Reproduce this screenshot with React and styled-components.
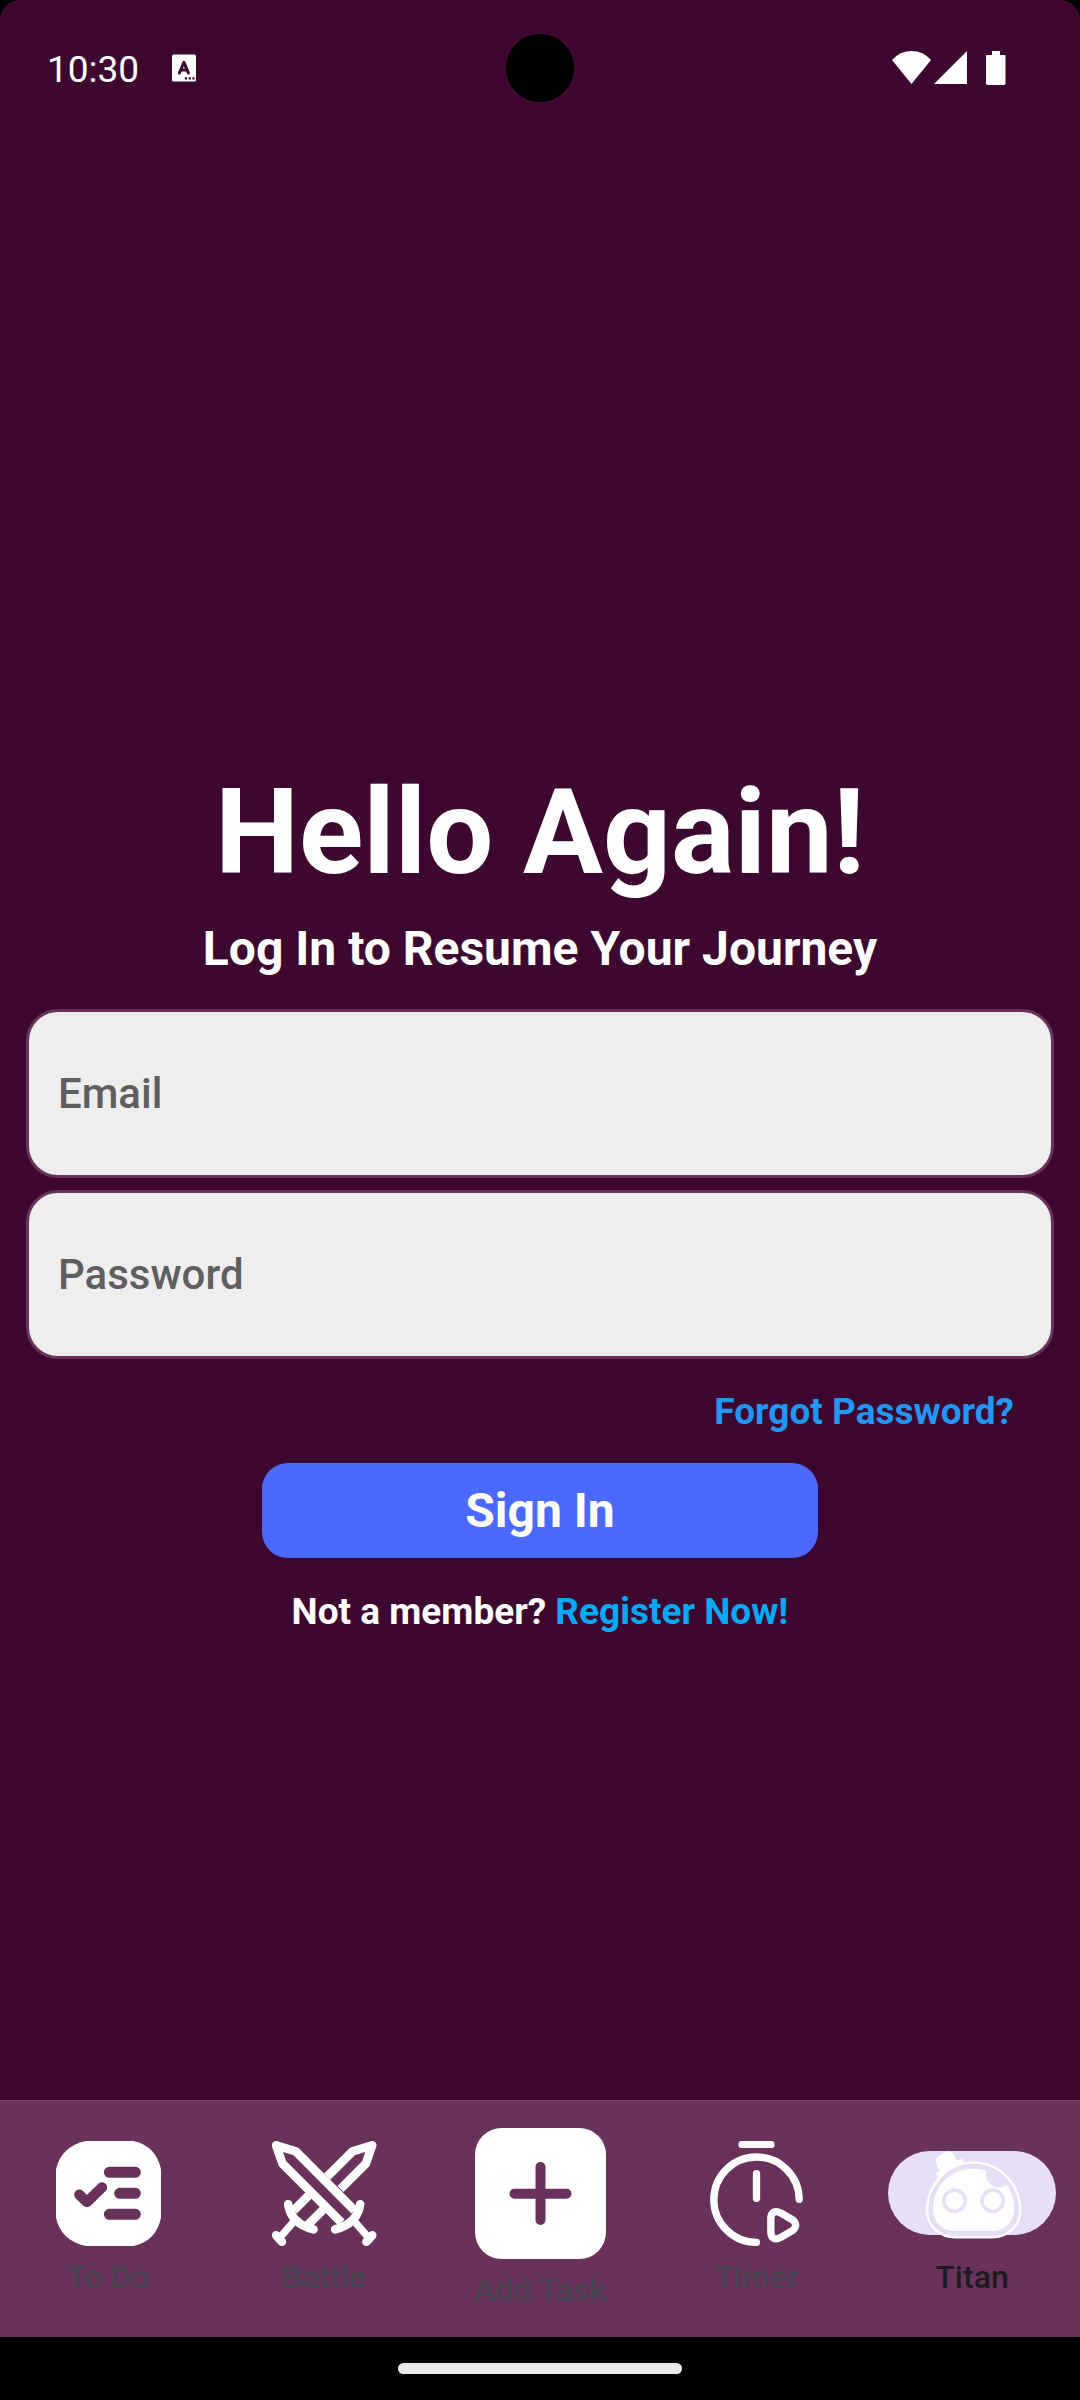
import React, { useState } from "react";
import styled, { createGlobalStyle } from "styled-components";

const color = {
  page: "#3d0830",
  bar: "#68325a",
  barEdge: "#74426a",
  field: "#eeeeee",
  hint: "#5f5f5f",
  primary: "#4b69ff",
  link: "#2196f3",
  register: "#03a9f4",
  label: "#49454f",
  labelActive: "#1d1b20",
  indicator: "#e8def8",
};

const GlobalStyle = createGlobalStyle`
  *, *::before, *::after { box-sizing: border-box; }
  body {
    margin: 0;
    background: #000;
    font-family: Roboto, "Noto Sans", sans-serif;
  }
`;

const Screen = styled.div`
  min-height: 100vh;
  display: flex;
  flex-direction: column;
  background: ${color.page};
  border-radius: 20px 20px 0 0;
  overflow: hidden;
`;

const StatusBar = styled.header`
  display: grid;
  grid-template-columns: 1fr auto 1fr;
  align-items: center;
  height: 136px;
  padding: 0 74px 0 47px;
  color: #fff;
`;

const StatusLeft = styled.div`
  display: flex;
  align-items: baseline;
  gap: 32px;
  padding-top: 4px;
`;

const Clock = styled.time`
  font-size: 37px;
  line-height: 44px;
`;

const Camera = styled.div`
  width: 68px;
  height: 68px;
  margin-left: 27px;
  border-radius: 50%;
  background: #000;
`;

const StatusRight = styled.div`
  display: flex;
  justify-content: flex-end;
`;

const Main = styled.main`
  flex: 1;
  display: flex;
  flex-direction: column;
  justify-content: center;
  padding: 160px 26px 0;
`;

const Title = styled.h1`
  margin: 0 0 18px;
  color: #fff;
  font-size: 119px;
  font-weight: 700;
  line-height: 140px;
  text-align: center;
`;

const Subtitle = styled.p`
  margin: 0 0 32px;
  color: #fff;
  font-size: 48px;
  font-weight: 700;
  line-height: 56px;
  text-align: center;
`;

const Form = styled.form`
  display: flex;
  flex-direction: column;
`;

const Fields = styled.div`
  display: grid;
  gap: 12px;
  margin-bottom: 31px;
`;

const Field = styled.input`
  width: 100%;
  height: 169px;
  padding: 0 29px;
  border: 3px solid ${color.bar};
  border-radius: 32px;
  outline: none;
  background: ${color.field};
  color: #222;
  font: 500 42px/50px Roboto, "Noto Sans", sans-serif;

  &::placeholder {
    color: ${color.hint};
    opacity: 1;
  }
`;

const TextLink = styled.a`
  color: ${(p) => p.$tone};
  font-size: 37px;
  font-weight: 700;
  line-height: 43px;
  text-decoration: none;
`;

const ForgotRow = styled.div`
  display: flex;
  justify-content: flex-end;
  padding-right: 40px;
  margin-bottom: 30px;
`;

const SubmitButton = styled.button`
  align-self: center;
  width: 556px;
  max-width: 100%;
  height: 95px;
  margin-bottom: 32px;
  border: 0;
  border-radius: 26px;
  background: ${color.primary};
  color: #fff;
  font: 700 48px/56px Roboto, "Noto Sans", sans-serif;
  cursor: pointer;
`;

const RegisterRow = styled.p`
  margin: 0;
  color: #fff;
  font-size: 37px;
  font-weight: 700;
  line-height: 43px;
  text-align: center;
`;

const NavBar = styled.nav`
  display: grid;
  grid-template-columns: repeat(5, 1fr);
  height: 237px;
  border-top: 1px solid ${color.barEdge};
  background: ${color.bar};
`;

const NavItem = styled.button`
  display: flex;
  flex-direction: column;
  align-items: center;
  justify-content: center;
  gap: 10px;
  padding: 0;
  border: 0;
  background: none;
  color: ${(p) => (p.$active ? color.labelActive : color.label)};
  font: 500 32px/42px Roboto, "Noto Sans", sans-serif;
  cursor: pointer;
`;

const IconSlot = styled.span`
  display: flex;
  align-items: center;
  justify-content: center;
  height: ${(p) => p.$size}px;
`;

const Indicator = styled.span`
  display: flex;
  align-items: center;
  justify-content: center;
  width: 168px;
  height: 84px;
  border-radius: 42px;
  background: ${(p) => (p.$active ? color.indicator : "transparent")};

  svg {
    flex: none;
  }
`;

const NavLabel = styled.span`
  display: block;
`;

const GestureBar = styled.footer`
  display: grid;
  place-items: center;
  height: 63px;
  background: #000;
`;

const Handle = styled.div`
  width: 284px;
  height: 11px;
  border-radius: 6px;
  background: #ebebeb;
`;

const KeyboardIcon = () => (
  <svg width="26" height="28" viewBox="0 0 26 28" aria-hidden="true">
    <rect x="1" y="0.5" width="24" height="27" rx="1.6" fill="#fff" />
    <path d="M8.4 19 12.9 8.4 17.4 19M10 16h6" fill="none" stroke={color.page} strokeWidth="3" strokeLinecap="round" strokeLinejoin="round" />
    <path d="M13.8 23.2h2.2v2.4h-2.2zM17.6 23.2h2.2v2.4h-2.2zM21.4 23.2h2.2v2.4h-2.2z" fill={color.page} />
  </svg>
);

const SystemIcons = () => (
  <svg width="114" height="36" viewBox="0 0 114 36" fill="#fff" aria-hidden="true">
    <path d="M0 10Q8 1 19.500 1T39 10L19.500 34Z" />
    <path d="M75 1V34H42Z" />
    <path d="M100 1h8v4h5.500v29l-1.500 1H96l-2-1V5h6Z" />
  </svg>
);

const TodoIcon = () => (
  <svg width="105" height="105" viewBox="165 180 315 315" aria-hidden="true">
    <path d="M255 180H397C445 190 470 220 480 265V410C470 455 445 485 397 495H255C205 485 175 455 165 410V265C175 220 205 190 255 180Z" fill="#fff" />
    <g fill="none" stroke={color.bar} strokeWidth="33" strokeLinecap="round" strokeLinejoin="round">
      <path d="M325 274H403M356 337H403M325 400H403" />
      <path d="M235 341 258 363 303 319" strokeWidth="31" />
    </g>
  </svg>
);

const BattleIcon = () => (
  <svg width="105" height="105" viewBox="154.500 180 315 315" fill="none" stroke="#fff" strokeWidth="26" strokeLinejoin="round" aria-hidden="true">
    <path d="M320 287 396 211 455 193 436 248 360 324" />
    <path d="M264 344 220 388M310 384 260 434" />
    <path d="M402 388 226 211 167 193 186 248 363 425" />
    <g strokeLinecap="round">
      <path d="M419 370Q410 428 344 445M203 370Q212 428 279 445" />
      <path d="M398 417 446 472M224 417 176 472" strokeWidth="22" />
      <path d="M455 463 438 482M167 463 184 482" />
    </g>
  </svg>
);

const AddIcon = () => (
  <svg width="131" height="131" viewBox="133.500 141 393 393" aria-hidden="true">
    <rect x="133.500" y="141" width="393" height="393" rx="80" fill="#fff" />
    <path d="M330 258V417M252 338H408" stroke={color.bar} strokeWidth="30" strokeLinecap="round" />
  </svg>
);

const TimerIcon = () => (
  <svg width="105" height="105" viewBox="160.500 180 315 315" fill="none" stroke="#fff" strokeWidth="22" strokeLinecap="round" strokeLinejoin="round" aria-hidden="true">
    <rect x="264" y="180" width="108" height="21" rx="8" fill="#fff" stroke="none" />
    <path d="M446 355A128 128 0 1 0 318 484" />
    <path d="M318 278V352" />
    <path d="M361 414C361 393 374 387 391 396L427 417Q444 432 427 448L391 469C374 478 361 473 361 452Z" />
  </svg>
);

const TitanIcon = () => (
  <svg width="105" height="105" viewBox="178.500 180 315 315" aria-hidden="true">
    <path d="M339 245C418 245 479 308 479 390C479 436 440 469 395 469H284C238 469 200 436 200 390C200 308 262 245 339 245Z" fill={color.indicator} stroke="#fff" strokeWidth="7" />
    <path d="M339 263C352 263 366 265 378 269C373 292 383 311 402 317Q422 322 438 311C453 331 461 355 461 383C461 425 430 450 392 450H287C248 450 218 425 218 383C218 315 268 263 339 263Z" fill="#fff" />
    <g fill="none" stroke={color.indicator} strokeWidth="10">
      <circle cx="282" cy="359" r="32" />
      <circle cx="396.500" cy="359" r="32" />
    </g>
    <path d="M227 245C224 235 230 227 239 223L252 214Q263 208 274 214Q282 220 285 231L290 239L303 233L313 244L297 252L262 269L240 291Q227 287 227 276L238 269Q228 257 227 245Z" fill="#fff" />
  </svg>
);

const navItems = [
  { label: "To Do", Icon: TodoIcon, size: 105 },
  { label: "Battle", Icon: BattleIcon, size: 105 },
  { label: "Add Task", Icon: AddIcon, size: 131 },
  { label: "Timer", Icon: TimerIcon, size: 105 },
  { label: "Titan", Icon: TitanIcon, size: 105 },
];

export default function App() {
  const [active, setActive] = useState("Titan");

  return (
    <>
      <GlobalStyle />
      <Screen>
        <StatusBar>
          <StatusLeft>
            <Clock>10:30</Clock>
            <KeyboardIcon />
          </StatusLeft>
          <Camera />
          <StatusRight>
            <SystemIcons />
          </StatusRight>
        </StatusBar>

        <Main>
          <Title>Hello Again!</Title>
          <Subtitle>Log In to Resume Your Journey</Subtitle>
          <Form onSubmit={(e) => e.preventDefault()}>
            <Fields>
              <Field type="email" placeholder="Email" aria-label="Email" />
              <Field type="password" placeholder="Password" aria-label="Password" />
            </Fields>
            <ForgotRow>
              <TextLink href="#forgot" $tone={color.link}>Forgot Password?</TextLink>
            </ForgotRow>
            <SubmitButton type="submit">Sign In</SubmitButton>
          </Form>
          <RegisterRow>
            Not a member? <TextLink href="#register" $tone={color.register}>Register Now!</TextLink>
          </RegisterRow>
        </Main>

        <NavBar>
          {navItems.map(({ label, Icon, size }) => (
            <NavItem
              key={label}
              type="button"
              $active={active === label}
              aria-current={active === label ? "page" : undefined}
              onClick={() => setActive(label)}
            >
              <IconSlot $size={size}>
                <Indicator $active={active === label}>
                  <Icon />
                </Indicator>
              </IconSlot>
              <NavLabel>{label}</NavLabel>
            </NavItem>
          ))}
        </NavBar>
        <GestureBar>
          <Handle />
        </GestureBar>
      </Screen>
    </>
  );
}
